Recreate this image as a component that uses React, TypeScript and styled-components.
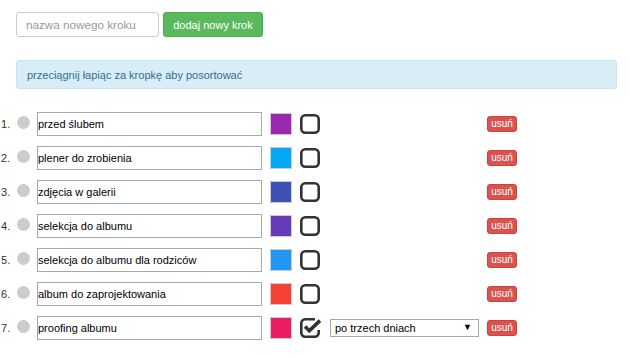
import React from "react";
import styled, { createGlobalStyle } from "styled-components";

const Global = createGlobalStyle`
  html, body { margin: 0; padding: 0; background: #fff; }
  body { font-family: "Liberation Sans", Arial, sans-serif; font-size: 11px; color: #333; }
  * { box-sizing: border-box; }
`;

const Page = styled.div`
  padding: 12px 13px 0 16px;
`;

const Toolbar = styled.div`
  display: flex;
  gap: 4px;
  height: 25px;
`;

const NewInput = styled.input`
  width: 143px;
  height: 25px;
  border: 1px solid #ccc;
  border-radius: 3px;
  padding: 0 9px;
  font-family: inherit;
  font-size: 11.7px;
  color: #555;
  &::placeholder { color: #999; }
`;

const AddButton = styled.button`
  width: 100px;
  height: 25px;
  background: #5cb85c;
  border: 1px solid #4cae4c;
  border-radius: 3px;
  color: #fff;
  font-family: inherit;
  font-size: 11px;
  padding: 0;
`;

const Alert = styled.div`
  margin-top: 23px;
  height: 29px;
  background: #d9edf7;
  border: 1px solid #bce8f1;
  border-radius: 3px;
  color: #31708f;
  padding-left: 10px;
  display: flex;
  align-items: center;
`;

const List = styled.div`
  margin: 18px 0 0 -16px;
  display: flex;
  flex-direction: column;
`;

const Row = styled.div`
  display: flex;
  align-items: center;
  height: 34px;
`;

const Num = styled.span`
  width: 13px;
  padding-left: 1px;
  color: #333;
  font-size: 11px;
`;

const Dot = styled.span`
  margin-left: 4px;
  width: 13px;
  height: 13px;
  border-radius: 50%;
  background: #ccc;
  margin-bottom: 4px;
`;

const NameInput = styled.input`
  margin-left: 7px;
  width: 225px;
  height: 24px;
  border: 1px solid #a9a9a9;
  padding: 0;
  font-family: inherit;
  font-size: 11px;
  color: #000;
  background: #fff;
`;

const Swatch = styled.span<{ $c: string }>`
  margin-left: 8px;
  width: 22px;
  height: 22px;
  border: 1px solid #ccc;
  background: ${(p) => p.$c};
`;

const Check = styled.span`
  margin-left: 8px;
  width: 22px;
  height: 22px;
  display: flex;
  align-items: center;
`;

const SelectSlot = styled.div`
  margin-left: 8px;
  width: 149px;
  height: 18px;
  position: relative;
`;

const Select = styled.select`
  appearance: none;
  width: 149px;
  height: 18px;
  border: 1px solid #a9a9a9;
  background: #fff;
  padding: 0 0 0 4px;
  font-family: inherit;
  font-size: 11px;
  color: #000;
  border-radius: 0;
`;

const Arrow = styled.span`
  position: absolute;
  right: 7px;
  top: 3px;
  font-size: 9px;
  color: #000;
  pointer-events: none;
`;

const Remove = styled.button`
  margin-left: 8px;
  height: 16px;
  width: 30px;
  padding: 0;
  background: #d9534f;
  border: 1px solid #d43f3a;
  border-radius: 3px;
  color: #fff;
  font-family: inherit;
  font-size: 10px;
  line-height: 14px;
`;

const CheckIcon = ({ on }: { on: boolean }) =>
  on ? (
    <svg width="22" height="20" viewBox="0 0 22 20">
      <path
        d="M15 1.3 H5.2 A3.9 3.9 0 0 0 1.3 5.2 V14.8 A3.9 3.9 0 0 0 5.2 18.7 H14.8 A3.9 3.9 0 0 0 18.7 14.8 V12"
        fill="none"
        stroke="#333"
        strokeWidth="2.6"
      />
      <path d="M5 8.5 L9.3 12.8 L20 2.6" fill="none" stroke="#333" strokeWidth="3.6" />
    </svg>
  ) : (
    <svg width="20" height="20" viewBox="0 0 20 20">
      <rect x="1.3" y="1.3" width="17.4" height="17.4" rx="4" fill="none" stroke="#333" strokeWidth="2.6" />
    </svg>
  );

const steps = [
  { name: "przed ślubem", color: "#9c27b0", on: false },
  { name: "plener do zrobienia", color: "#03a9f4", on: false },
  { name: "zdjęcia w galerii", color: "#3f51b5", on: false },
  { name: "selekcja do albumu", color: "#673ab7", on: false },
  { name: "selekcja do albumu dla rodziców", color: "#2196f3", on: false },
  { name: "album do zaprojektowania", color: "#f44336", on: false },
  { name: "proofing albumu", color: "#e91e63", on: true },
];

export default function App() {
  return (
    <Page>
      <Global />
      <Toolbar>
        <NewInput placeholder="nazwa nowego kroku" />
        <AddButton>dodaj nowy krok</AddButton>
      </Toolbar>
      <Alert>przeciągnij łapiąc za kropkę aby posortować</Alert>
      <List>
        {steps.map((s, i) => (
          <Row key={i}>
            <Num>{i + 1}.</Num>
            <Dot />
            <NameInput defaultValue={s.name} />
            <Swatch $c={s.color} />
            <Check>
              <CheckIcon on={s.on} />
            </Check>
            <SelectSlot>
              {s.on && (
                <>
                  <Select defaultValue="3">
                    <option value="3">po trzech dniach</option>
                  </Select>
                  <Arrow>▼</Arrow>
                </>
              )}
            </SelectSlot>
            <Remove>usuń</Remove>
          </Row>
        ))}
      </List>
    </Page>
  );
}
